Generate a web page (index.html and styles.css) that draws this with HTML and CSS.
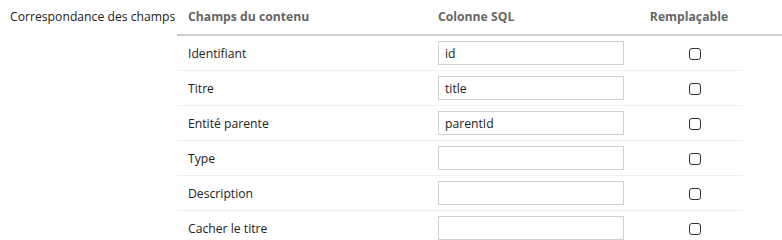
FILE: index.html
```html
<!DOCTYPE html>
<html lang="fr">
<head>
    <meta charset="UTF-8">
    <title>Correspondance des champs</title>
    <link rel="stylesheet" href="styles.css">
</head>
<body>
    <div class="field-row">
        <label class="field-label">Correspondance des champs</label>
        <div class="mapping">
            <div class="mapping-head">
                <div class="col-name">Champs du contenu</div>
                <div class="col-sql">Colonne SQL</div>
                <div class="col-replace">Remplaçable</div>
            </div>
            <div class="mapping-row">
                <div class="col-name">Identifiant</div>
                <div class="col-sql"><input type="text" value="id"></div>
                <div class="col-replace"><input type="checkbox"></div>
            </div>
            <div class="mapping-row">
                <div class="col-name">Titre</div>
                <div class="col-sql"><input type="text" value="title"></div>
                <div class="col-replace"><input type="checkbox"></div>
            </div>
            <div class="mapping-row">
                <div class="col-name">Entité parente</div>
                <div class="col-sql"><input type="text" value="parentId"></div>
                <div class="col-replace"><input type="checkbox"></div>
            </div>
            <div class="mapping-row">
                <div class="col-name">Type</div>
                <div class="col-sql"><input type="text" value=""></div>
                <div class="col-replace"><input type="checkbox"></div>
            </div>
            <div class="mapping-row">
                <div class="col-name">Description</div>
                <div class="col-sql"><input type="text" value=""></div>
                <div class="col-replace"><input type="checkbox"></div>
            </div>
            <div class="mapping-row">
                <div class="col-name">Cacher le titre</div>
                <div class="col-sql"><input type="text" value=""></div>
                <div class="col-replace"><input type="checkbox"></div>
            </div>
        </div>
    </div>
</body>
</html>
```
FILE: styles.css
```css
* {
    box-sizing: border-box;
}
body {
    margin: 0;
    font-family: "Open Sans", Arial, sans-serif;
    font-size: 12.2px;
    color: #222;
    background-color: white;
}
.field-row {
    display: flex;
}
.field-label {
    flex: none;
    width: 177px;
    padding-left: 10px;
    line-height: 34px;
    white-space: nowrap;
}
.mapping {
    flex: 1;
}
.mapping-head {
    display: flex;
    height: 36px;
    padding-bottom: 2px;
    align-items: center;
    border-bottom: 2px solid #cfcfcf;
    font-weight: bold;
    color: #666;
}
.mapping-row {
    display: flex;
    width: 566px;
    height: 35px;
    align-items: center;
    border-bottom: 1px solid #eee;
}
.col-name {
    flex: none;
    width: 250px;
    padding-left: 11px;
    white-space: nowrap;
}
.col-sql {
    flex: none;
    width: 220px;
    padding-left: 11px;
}
.col-replace {
    flex: none;
    width: 96px;
    text-align: center;
}
.mapping-head .col-replace {
    padding-right: 12px;
}
input[type="text"] {
    width: 186px;
    height: 24px;
    padding: 0 6px;
    border: 1px solid #d0d0d0;
    font-family: "Open Sans", Arial, sans-serif;
    font-size: 12.2px;
    color: #222;
}
input[type="checkbox"] {
    appearance: none;
    width: 12px;
    height: 12px;
    margin: 0;
    border: 1.5px solid #333;
    border-radius: 3px;
    vertical-align: middle;
}
```
